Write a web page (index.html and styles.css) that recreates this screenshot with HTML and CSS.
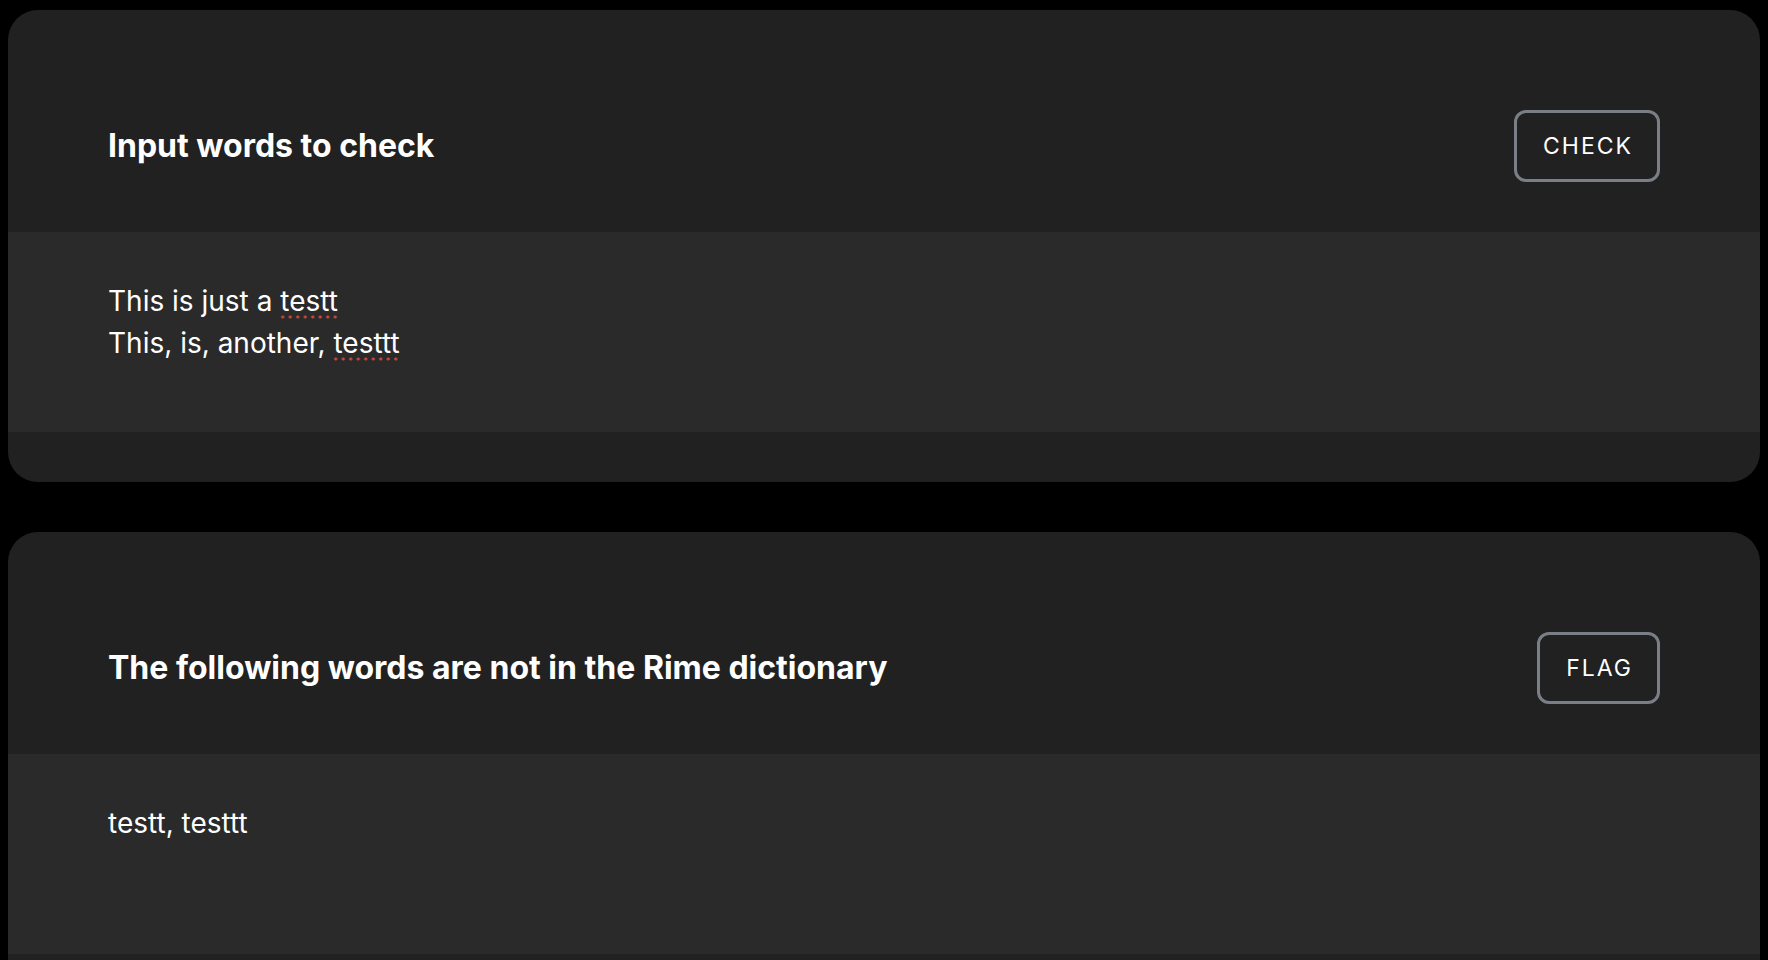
FILE: index.html
```html
<!DOCTYPE html>
<html lang="en">
<head>
<meta charset="utf-8">
<title>Rime dictionary check</title>
<link rel="stylesheet" href="styles.css">
</head>
<body>
<main class="page">
  <section class="card">
    <header class="card-head">
      <h2 class="card-title">Input words to check</h2>
      <button class="btn">CHECK</button>
    </header>
    <div class="card-body input-body">
      <div class="line">This is just a <span class="misspelled">testt</span></div>
      <div class="line">This, is, another, <span class="misspelled">testtt</span></div>
    </div>
  </section>
  <section class="card">
    <header class="card-head">
      <h2 class="card-title">The following words are not in the Rime dictionary</h2>
      <button class="btn">FLAG</button>
    </header>
    <div class="card-body">
      <div class="line">testt, testtt</div>
    </div>
  </section>
</main>
</body>
</html>
```
FILE: styles.css
```css
html, body {
  margin: 0;
  padding: 0;
  background: #000;
}
body {
  padding: 10px 8px 8px;
  font-family: Inter, "Noto Sans", sans-serif;
  color: #fff;
}
.page {
  display: flex;
  flex-direction: column;
  gap: 50px;
}
.card {
  background: #212121;
  border-radius: 30px;
  padding-bottom: 50px;
  overflow: hidden;
}
.card-head {
  display: flex;
  align-items: center;
  justify-content: space-between;
  padding: 100px 100px 50px;
}
.card-title {
  margin: 0;
  font-size: 32px;
  font-weight: 700;
  line-height: 1.2;
}
.btn {
  box-sizing: border-box;
  height: 72px;
  padding: 0 24px 0 26px;
  background: transparent;
  border: 3px solid #7a7f87;
  border-radius: 12px;
  color: #fff;
  font-family: Inter, sans-serif;
  font-size: 23px;
  letter-spacing: 2px;
  font-weight: 400;
}
.card-body {
  box-sizing: border-box;
  height: 200px;
  background: #2a2a2a;
  padding: 48px 100px;
  font-size: 28px;
  line-height: 42px;
}
.misspelled {
  background-image: radial-gradient(circle, #c8483b 1.3px, transparent 1.8px);
  background-size: 7.5px 4px;
  background-repeat: repeat-x;
  background-position: -1px 100%;
  padding-bottom: 1px;
}
```
